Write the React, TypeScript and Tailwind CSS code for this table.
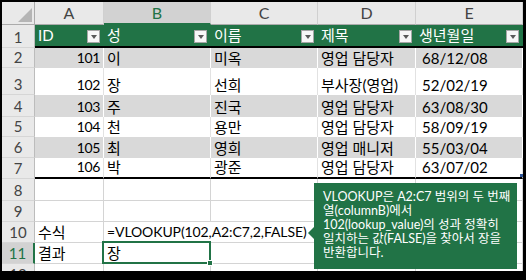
import React from "react";

const colW = ["w-[69px]", "w-[107px]", "w-[107px]", "w-[98px]", "w-[107px]"];
const letters = ["A", "B", "C", "D", "E"];
const heads = ["ID", "성", "이름", "제목", "생년월일"];

const rows = [
  { n: 2, h: "h-[20px]", d: ["101", "이", "미옥", "영업 담당자", "68/12/08"] },
  { n: 3, h: "h-[27px]", d: ["102", "장", "선희", "부사장(영업)", "52/02/19"] },
  { n: 4, h: "h-[22px]", d: ["103", "주", "진국", "영업 담당자", "63/08/30"] },
  { n: 5, h: "h-[20px]", d: ["104", "천", "용만", "영업 담당자", "58/09/19"] },
  { n: 6, h: "h-[21px]", d: ["105", "최", "영희", "영업 매니저", "55/03/04"] },
  { n: 7, h: "h-[21px]", d: ["106", "박", "광준", "영업 담당자", "63/07/02"] },
];

function RowNum({ n, h, active }: { n: number; h: string; active?: boolean }) {
  return (
    <div
      className={`${h} w-[33px] shrink-0 flex items-end justify-center pb-[1px] text-[15px] leading-[18px] border-b border-[#d6d6d6] ${
        active
          ? "bg-[#d2d2d2] text-[#217346] border-r-2 border-r-[#217346]"
          : "bg-[#e9e9e9] text-[#444] border-r border-r-[#bcbcbc]"
      }`}
    >
      {n}
    </div>
  );
}

function FilterBtn() {
  return (
    <span className="ml-auto mr-[4px] mb-[3px] w-[13px] h-[13px] shrink-0 bg-[#f7f7f7] border border-[#a6a6a6] flex items-center justify-center">
      <span className="w-0 h-0 border-l-[3px] border-r-[3px] border-t-[4px] border-l-transparent border-r-transparent border-t-[#595959]" />
    </span>
  );
}

function EmptyRow({ n, h }: { n: number; h: string }) {
  return (
    <div className="flex">
      <RowNum n={n} h={h} />
      {colW.map((w, i) => (
        <div key={i} className={`${w} ${h} shrink-0 border-r border-b border-[#d4d4d4]`} />
      ))}
    </div>
  );
}

export default function App() {
  return (
    <div className="w-[526px] h-[280px] bg-black pt-[2px] pl-[2px] pr-[3px] pb-[9px] overflow-hidden">
      <div
        className="relative w-full h-full bg-white overflow-hidden text-black"
        style={{ fontFamily: 'Lato, "Noto Sans CJK KR", sans-serif' }}
      >
        {/* column headers */}
        <div className="flex h-[23px]">
          <div className="w-[33px] shrink-0 bg-[#e9e9e9] border-r border-b border-[#ababab] relative">
            <span className="absolute right-[2px] bottom-[2px] w-0 h-0 [border-bottom:14px_solid_#b5b5b5] [border-left:14px_solid_transparent]" />
          </div>
          {letters.map((l, i) => (
            <div
              key={l}
              className={`${colW[i]} shrink-0 flex items-center justify-center text-[16px] border-r border-[#d0d0d0] ${
                i === 1
                  ? "bg-[#d2d2d2] text-[#217346] border-b-2 border-b-[#217346]"
                  : "bg-[#e9e9e9] text-[#444] border-b border-b-[#ababab]"
              }`}
            >
              {l}
            </div>
          ))}
        </div>

        {/* table header row 1 */}
        <div className="flex">
          <RowNum n={1} h="h-[23px]" />
          {heads.map((t, i) => (
            <div
              key={t}
              className={`${colW[i]} h-[23px] shrink-0 bg-[#217346] text-white flex items-end pl-[3px] text-[15px] leading-[20px] border-b-2 border-black`}
            >
              <span className="pb-[1px]">{t}</span>
              <FilterBtn />
            </div>
          ))}
        </div>

        {/* data rows */}
        {rows.map((r, ri) => {
          const gray = ri % 2 === 0;
          const last = ri === rows.length - 1;
          return (
            <div key={r.n} className="flex">
              <RowNum n={r.n} h={r.h} />
              {r.d.map((v, i) => (
                <div
                  key={i}
                  className={`${colW[i]} ${r.h} shrink-0 flex items-end leading-[20px] border-r ${
                    gray ? "bg-[#d9d9d9] border-r-white" : "bg-white border-r-[#e2e2e2]"
                  } ${last ? "border-b-2 border-b-black" : ""} ${
                    i === 0
                      ? "justify-end pr-[3px] text-[14px] tracking-[-0.4px]"
                      : i === 4
                      ? "pl-[6px] text-[15px]"
                      : "pl-[3px] text-[15px]"
                  } relative`}
                >
                  {v}
                  {last && i === 4 && (
                    <span className="absolute right-[-1px] bottom-[0px] w-[3px] h-[3px] bg-[#2f5597]" />
                  )}
                </div>
              ))}
            </div>
          );
        })}

        <EmptyRow n={8} h="h-[22px]" />
        <EmptyRow n={9} h="h-[21px]" />

        {/* row 10 */}
        <div className="flex">
          <RowNum n={10} h="h-[21px]" />
          <div className="w-[69px] h-[21px] shrink-0 border-r border-b border-[#d4d4d4] flex items-end pl-[3px] text-[15px] leading-[20px]">
            수식
          </div>
          <div className="w-[214px] h-[21px] shrink-0 border-r border-b border-[#d4d4d4] flex items-end pl-[3px] text-[14px] tracking-[-0.1px] leading-[20px] whitespace-nowrap">
            =VLOOKUP(102,A2:C7,2,FALSE)
          </div>
          <div className="w-[98px] h-[21px] shrink-0 border-r border-b border-[#d4d4d4]" />
          <div className="w-[107px] h-[21px] shrink-0 border-r border-b border-[#d4d4d4]" />
        </div>

        {/* row 11 */}
        <div className="flex">
          <RowNum n={11} h="h-[21px]" active />
          <div className="w-[69px] h-[21px] shrink-0 border-r border-b border-[#d4d4d4] flex items-end pl-[3px] text-[15px] leading-[20px]">
            결과
          </div>
          <div className="w-[107px] h-[21px] shrink-0 border-r border-b border-[#d4d4d4] flex items-end pl-[3px] text-[15px] leading-[20px] relative">
            장
            <span className="absolute -left-[2px] -top-[2px] -right-[1px] -bottom-[1px] border-2 border-[#217346]" />
            <span className="absolute -right-[3px] -bottom-[3px] w-[6px] h-[6px] bg-[#217346] border border-white" />
          </div>
          <div className="w-[107px] h-[21px] shrink-0 border-r border-b border-[#d4d4d4]" />
          <div className="w-[98px] h-[21px] shrink-0 border-r border-b border-[#d4d4d4]" />
          <div className="w-[107px] h-[21px] shrink-0 border-r border-b border-[#d4d4d4]" />
        </div>

        <EmptyRow n={12} h="h-[21px]" />

        {/* callout comment */}
        <div className="absolute left-[312px] top-[181px] w-[203px] h-[86px] bg-[#217346] text-white text-[12.5px] leading-[14px] pl-[9px] pt-[7px] whitespace-nowrap">
          <span className="absolute -left-[6px] top-[44px] w-0 h-0 border-t-[6px] border-b-[6px] border-r-[6px] border-t-transparent border-b-transparent border-r-[#217346]" />
          <div>VLOOKUP은 A2:C7 범위의 두 번째</div>
          <div>열(columnB)에서</div>
          <div>102(lookup_value)의 성과 정확히</div>
          <div>일치하는 값(FALSE)을 찾아서 장을</div>
          <div>반환합니다.</div>
        </div>
      </div>
    </div>
  );
}
